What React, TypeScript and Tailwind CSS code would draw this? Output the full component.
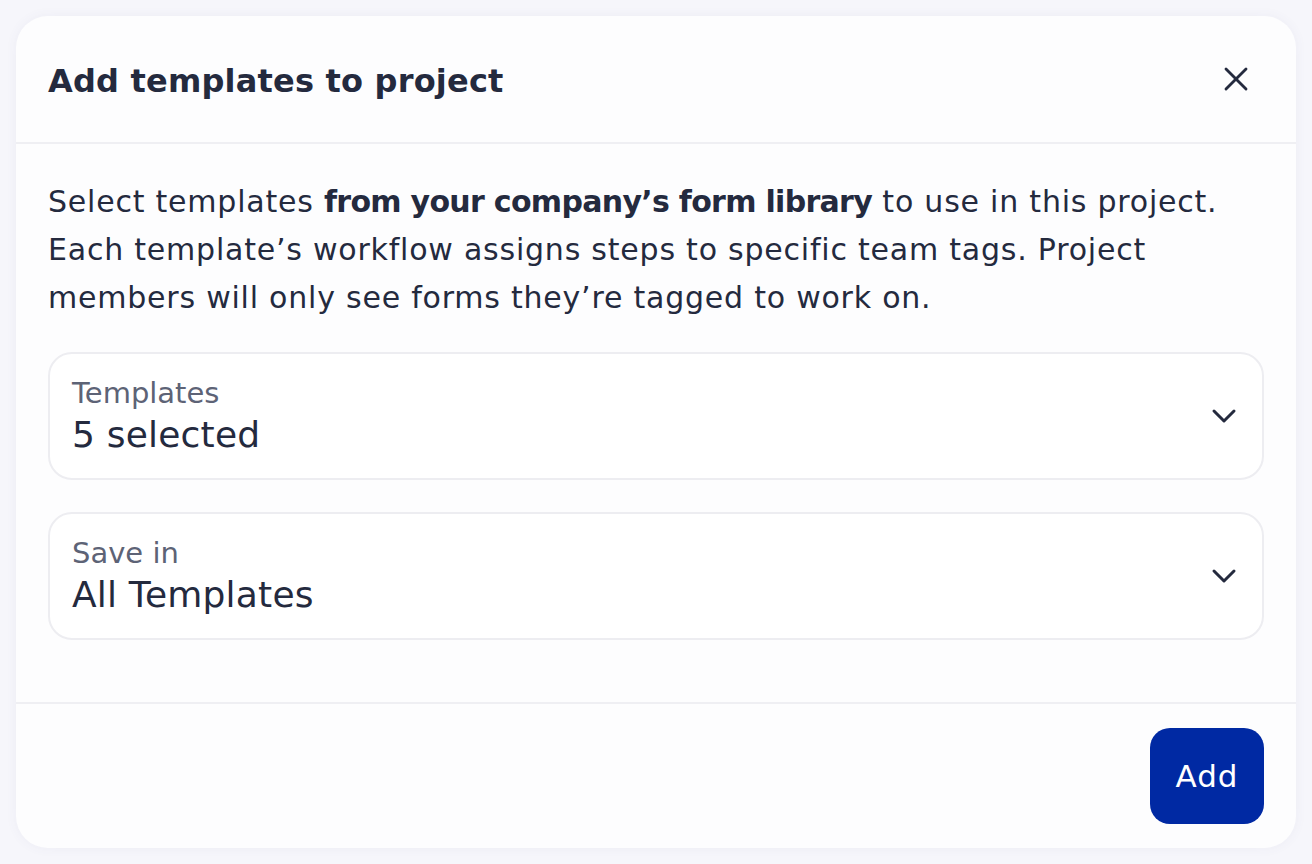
import { X, ChevronDown } from "lucide-react";

const fields = [
  { label: "Templates", value: "5 selected" },
  { label: "Save in", value: "All Templates" },
];

const App = () => {
  return (
    <div
      className="min-h-screen w-full bg-[#f6f6fb] p-4"
      style={{ fontFamily: "'DejaVu Sans', Inter, sans-serif" }}
    >
      <div className="flex h-[832px] w-[1280px] flex-col rounded-[32px] bg-[#fdfdfe] shadow-[0_0_12px_rgba(80,80,140,0.06)]">
        {/* Header */}
        <div className="flex h-[128px] items-center justify-between border-b-2 border-[#efeff3] px-8">
          <h1 className="mt-[3px] text-[32px] font-bold tracking-[0.2px] text-[#242a3e]">
            Add templates to project
          </h1>
          <button className="mr-2 flex h-10 w-10 items-center justify-center text-[#242a3e]">
            <X size={40} strokeWidth={1.7} />
          </button>
        </div>

        {/* Body */}
        <div className="flex flex-1 flex-col px-8 pt-[34px]">
          <p className="text-[30px] leading-[48px] tracking-[0.78px] text-[#242a3e]">
            Select templates <span className="font-bold tracking-[-0.7px]">from your company’s form library</span> to use in this project.
            <br />
            Each template’s workflow assigns steps to specific team tags. Project
            <br />
            members will only see forms they’re tagged to work on.
          </p>

          <div className="mt-[30px] flex flex-col gap-8">
            {fields.map((f) => (
              <div
                key={f.label}
                className="flex h-[128px] items-center justify-between rounded-[24px] border-2 border-[#ededf1] bg-white pl-[22px] pr-[18px]"
              >
                <div className="flex h-full flex-col pt-[21px]">
                  <span className="text-[29px] leading-[36px] text-[#5d6376]">{f.label}</span>
                  <span className="mt-[2px] text-[36px] leading-[44px] tracking-[0.2px] text-[#242a3e]">{f.value}</span>
                </div>
                <ChevronDown size={40} strokeWidth={1.8} className="text-[#242a3e]" />
              </div>
            ))}
          </div>
        </div>

        {/* Footer */}
        <div className="flex justify-end border-t-2 border-[#efeff3] px-8 py-6">
          <button className="flex h-24 w-[114px] items-center justify-center rounded-[20px] bg-[#0029a3] text-[31px] tracking-[1px] text-white">
            Add
          </button>
        </div>
      </div>
    </div>
  );
};

export default App;
